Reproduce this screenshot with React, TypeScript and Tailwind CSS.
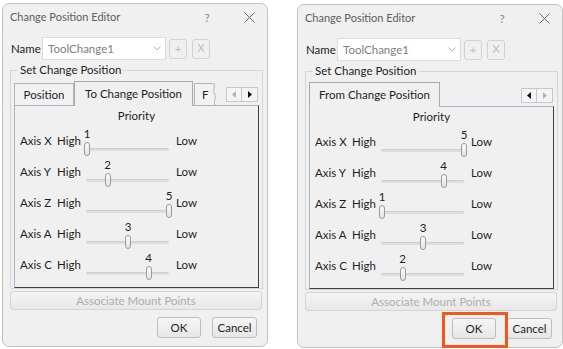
import React from "react";

type Tab = { label: string; active?: boolean; cut?: boolean; w: number };

const AXES = ["Axis X", "Axis Y", "Axis Z", "Axis A", "Axis C"];

function Slider({ value }: { value: number }) {
  const center = 3 + (value - 1) * 20.5;
  return (
    <div className="relative w-[87px] h-[31px]">
      <div className="mt-[22px] mx-[2px] h-[3px] rounded-full bg-[#dedede] border-t border-[#cfcfcf]" />
      <span
        className="absolute top-[1px] w-[14px] text-center text-[11.5px] leading-[14px] text-[#1e1e1e]"
        style={{ left: center - 7 }}
      >
        {value}
      </span>
      <span
        className="absolute top-[16px] w-[6px] h-[14px] rounded-[3px] border border-[#9a9a9a] bg-gradient-to-b from-[#fbfbfb] to-[#e4e4e4]"
        style={{ left: center - 3 }}
      />
    </div>
  );
}

function Arrows({ leftOn, rightOn }: { leftOn: boolean; rightOn: boolean }) {
  return (
    <div className="ml-auto mr-[1px] mb-[3px] flex h-[15px]">
      <div className="w-[16px] h-full border border-[#c8c8c8] bg-[#f4f4f4] flex items-center justify-center">
        <svg width="4" height="7" viewBox="0 0 4 7">
          <polygon points="4,0 0,3.5 4,7" fill={leftOn ? "#111" : "#b4b4b4"} />
        </svg>
      </div>
      <div className="w-[16px] h-full border border-l-0 border-[#c8c8c8] bg-[#f4f4f4] flex items-center justify-center">
        <svg width="4" height="7" viewBox="0 0 4 7">
          <polygon points="0,0 4,3.5 0,7" fill={rightOn ? "#111" : "#b4b4b4"} />
        </svg>
      </div>
    </div>
  );
}

function Dialog({
  tabs,
  values,
  leftOn,
  rightOn,
  highlight,
}: {
  tabs: Tab[];
  values: number[];
  leftOn: boolean;
  rightOn: boolean;
  highlight?: boolean;
}) {
  return (
    <div className="w-[266px] h-[344px] shrink-0 flex flex-col rounded-[7px] border border-[#c2c2c2] bg-[#f0f0f0] text-[11.5px] text-[#1e1e1e]">
      {/* title bar */}
      <div className="h-[27px] flex items-center pl-[7px] pr-[4px]">
        <span className="text-[11px] text-[#5c5c5c]">Change Position Editor</span>
        <span className="ml-auto w-[28px] text-center text-[#8a8a8a]">?</span>
        <span className="ml-[14px] w-[28px] flex justify-center">
          <svg width="11" height="11" viewBox="0 0 11 11">
            <path d="M0.5 0.5 L10.5 10.5 M10.5 0.5 L0.5 10.5" stroke="#6a6a6a" strokeWidth="1" />
          </svg>
        </span>
      </div>

      {/* name row */}
      <div className="mt-[6px] h-[23px] flex items-center pl-[8px]">
        <span className="w-[31px]">Name</span>
        <div className="w-[124px] h-[23px] flex items-center bg-white border border-[#dcdcdc] pl-[5px] pr-[4px]">
          <span className="text-[#808080]">ToolChange1</span>
          <svg className="ml-auto" width="8" height="5" viewBox="0 0 8 5">
            <polyline points="0.5,0.5 4,4 7.5,0.5" fill="none" stroke="#b0b0b0" strokeWidth="1" />
          </svg>
        </div>
        <div className="ml-[3px] w-[18px] h-[20px] rounded-[3px] border border-[#d2d2d2] flex items-center justify-center text-[#bdbdbd]">
          +
        </div>
        <div className="ml-[5px] w-[18px] h-[20px] rounded-[3px] border border-[#d2d2d2] flex items-center justify-center text-[#bdbdbd] text-[11px]">
          X
        </div>
      </div>

      {/* group */}
      <fieldset className="mt-[2px] ml-[7px] w-[253px] border border-[#d6d6d6] px-[3px] pb-0">
        <legend className="ml-[4px] px-[2px] h-[16px] leading-[16px]">Set Change Position</legend>
        <div className="mt-[3px] h-[24px] flex items-end">
          {tabs.map((t) =>
            t.active ? (
              <div
                key={t.label}
                className="relative z-10 -mb-[1px] h-[25px] flex items-center justify-center border border-b-0 border-[#a9a9a9] bg-[#f0f0f0]"
                style={{ width: t.w }}
              >
                {t.label}
              </div>
            ) : t.cut ? (
              <div key={t.label} className="ml-[1px] h-[22px] flex items-stretch" style={{ width: t.w }}>
                <div className="flex-1 flex items-center pl-[7px] border-l border-t border-[#b4b4b4] bg-[#f2f2f2]">
                  {t.label}
                </div>
                <svg width="5" height="22" viewBox="0 0 5 22">
                  <path d="M0 0 H1.5 C4 4 0 7 2.5 11 C5 15 1 18 3 22" fill="none" stroke="#b4b4b4" strokeWidth="1" />
                </svg>
              </div>
            ) : (
              <div
                key={t.label}
                className="h-[22px] flex items-center justify-center border border-b-0 border-[#b4b4b4] bg-[#f2f2f2]"
                style={{ width: t.w }}
              >
                {t.label}
              </div>
            )
          )}
          <Arrows leftOn={leftOn} rightOn={rightOn} />
        </div>
        <div className="h-[183px] border border-l-[#a6b6c6] border-t-[#a6b6c6] border-r-[#3e3e3e] border-b-[#3e3e3e] bg-[#f0f0f0]">
          <div className="h-[20px] leading-[20px] text-center">Priority</div>
          {AXES.map((a, i) => (
            <div key={a} className="h-[31px] flex items-start pl-[5px]">
              <span className="mt-[7px] w-[37px] leading-[16px]">{a}</span>
              <span className="mt-[7px] w-[27px] leading-[16px]">High</span>
              <Slider value={values[i]} />
              <span className="mt-[7px] ml-[5px] leading-[16px]">Low</span>
            </div>
          ))}
        </div>
      </fieldset>

      {/* associate */}
      <div className="mt-[2px] ml-[7px] w-[252px] h-[19px] rounded-[3px] border border-[#d4d4d4] bg-gradient-to-b from-[#f4f4f4] to-[#e8e8e8] flex items-center justify-center text-[#adadad]">
        Associate Mount Points
      </div>

      {/* buttons */}
      <div className="mt-[7px] flex justify-end pr-[10px]">
        <div className="relative">
          <div className="w-[44px] h-[21px] rounded-[3px] border border-[#bdbdbd] bg-gradient-to-b from-[#f6f6f6] to-[#e6e6e6] flex items-center justify-center">
            OK
          </div>
          {highlight && (
            <span className="absolute -left-[10px] -right-[12px] -top-[6px] -bottom-[9px] border-[3px] border-[#f2581d]" />
          )}
        </div>
        <div className="ml-[11px] w-[45px] h-[21px] rounded-[3px] border border-[#bdbdbd] bg-gradient-to-b from-[#f6f6f6] to-[#e6e6e6] flex items-center justify-center">
          Cancel
        </div>
      </div>
    </div>
  );
}

export default function App() {
  return (
    <div
      className="w-[563px] h-[349px] bg-white flex items-start pl-[2px] pt-[3px] gap-[29px] overflow-hidden"
      style={{ fontFamily: "Lato, 'Noto Sans', sans-serif" }}
    >
      <Dialog
        tabs={[
          { label: "Position", w: 60 },
          { label: "To Change Position", active: true, w: 119 },
          { label: "F", cut: true, w: 23 },
        ]}
        values={[1, 2, 5, 3, 4]}
        leftOn={false}
        rightOn={true}
      />
      <div className="mt-[1px]">
        <Dialog
          tabs={[{ label: "From Change Position", active: true, w: 131 }]}
          values={[5, 4, 1, 3, 2]}
          leftOn={true}
          rightOn={false}
          highlight
        />
      </div>
    </div>
  );
}
